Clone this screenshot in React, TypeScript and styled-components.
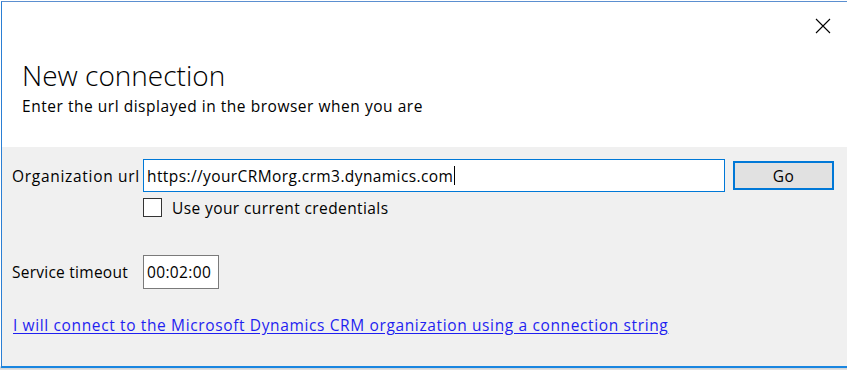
import React from "react";
import styled, { createGlobalStyle } from "styled-components";

const GlobalStyle = createGlobalStyle`
  html, body {
    margin: 0;
    padding: 0;
    background: #ffffff;
    overflow: hidden;
  }
  body {
    font-family: "Open Sans", "Noto Sans", sans-serif;
    color: #000;
  }
`;

const Backdrop = styled.div`
  width: 847px;
  height: 370px;
  overflow: hidden;
  background: linear-gradient(#fff 0, #fff 366px, #c8c8c8 367px, #e6e6e6 370px);
`;

const Window = styled.div`
  margin-left: 1px;
  margin-top: 1px;
  width: 900px;
  height: 364px;
  border-top: 1px solid #5b8fd0;
  border-left: 1px solid #2b7fd4;
  border-bottom: 2px solid #1a86e0;
  display: flex;
  flex-direction: column;
  background: #f0f0f0;
`;

const Header = styled.div`
  background: #ffffff;
  height: 145px;
  padding-left: 20px;
  display: flex;
  flex-direction: column;
`;

const TitleBar = styled.div`
  height: 56px;
  width: 810px;
  display: flex;
  justify-content: flex-end;
  align-items: flex-start;
`;

const CloseButton = styled.button`
  border: 0;
  background: transparent;
  padding: 0;
  margin-top: 15px;
  width: 18px;
  height: 18px;
  display: flex;
  align-items: center;
  justify-content: center;
  cursor: default;
`;

const Title = styled.h1`
  margin: 0;
  font-family: "Open Sans", sans-serif;
  font-weight: 300;
  font-size: 28px;
  line-height: 34px;
  color: #000;
`;

const Subtitle = styled.p`
  margin: 4px 0 0;
  font-size: 15.5px;
  line-height: 20px;
  letter-spacing: 0.53px;
  color: #000;
`;

const Body = styled.div`
  flex: 1;
  padding: 12px 0 0 10px;
  display: flex;
  flex-direction: column;
`;

const FieldRow = styled.div<{ $height: number; $top?: number }>`
  display: flex;
  align-items: center;
  height: ${(p) => p.$height}px;
  margin-top: ${(p) => p.$top ?? 0}px;
`;

const Label = styled.label<{ $spacing: number }>`
  width: 131px;
  flex-shrink: 0;
  font-size: 15.5px;
  letter-spacing: ${(p) => p.$spacing}px;
  color: #000;
`;

const UrlBox = styled.div`
  width: 577px;
  height: 31px;
  border: 1px solid #0078d7;
  background: #fff;
  display: flex;
  align-items: center;
  padding-left: 3px;
  box-sizing: content-box;
  font-size: 15.5px;
  letter-spacing: 0.4px;
`;

const Caret = styled.span`
  display: inline-block;
  width: 1px;
  height: 19px;
  background: #000;
  margin-left: 1px;
`;

const GoButton = styled.button`
  margin-left: 8px;
  width: 101px;
  height: 29px;
  border: 2px solid #0078d7;
  background: #e1e1e1;
  font-family: "Open Sans", sans-serif;
  font-size: 15.5px;
  letter-spacing: 0.4px;
  color: #000;
  padding: 0;
`;

const CheckRow = styled.div`
  display: flex;
  align-items: center;
  margin-left: 131px;
  margin-top: 6px;
  height: 19px;
  gap: 10px;
`;

const CheckBox = styled.span`
  width: 17px;
  height: 17px;
  border: 1px solid #333;
  background: #fff;
`;

const CheckLabel = styled.span`
  font-size: 15.5px;
  letter-spacing: 0.4px;
`;

const TimeBox = styled.div`
  width: 71px;
  height: 32px;
  border: 1px solid #7a7a7a;
  background: #fff;
  display: flex;
  align-items: center;
  padding-left: 3px;
  font-size: 15.5px;
  letter-spacing: 0.35px;
`;

const LinkRow = styled.div`
  margin-top: 25px;
  padding-left: 1px;
`;

const Link = styled.a`
  font-family: "Open Sans", sans-serif;
  font-size: 15.5px;
  letter-spacing: 0.63px;
  color: #1f1ff0;
  text-decoration: underline;
  text-underline-offset: 2px;
`;

export default function App() {
  return (
    <Backdrop>
      <GlobalStyle />
      <Window>
        <Header>
          <TitleBar>
            <CloseButton aria-label="Close">
              <svg width="16" height="16" viewBox="0 0 16 16">
                <path d="M1 1 L15 15 M15 1 L1 15" stroke="#000" strokeWidth="1.1" fill="none" />
              </svg>
            </CloseButton>
          </TitleBar>
          <Title>New connection</Title>
          <Subtitle>Enter the url displayed in the browser when you are</Subtitle>
        </Header>
        <Body>
          <FieldRow $height={33}>
            <Label $spacing={0.7}>Organization url</Label>
            <UrlBox>
              https://yourCRMorg.crm3.dynamics.com
              <Caret />
            </UrlBox>
            <GoButton>Go</GoButton>
          </FieldRow>
          <CheckRow>
            <CheckBox />
            <CheckLabel>Use your current credentials</CheckLabel>
          </CheckRow>
          <FieldRow $height={34} $top={38}>
            <Label $spacing={0.25}>Service timeout</Label>
            <TimeBox>00:02:00</TimeBox>
          </FieldRow>
          <LinkRow>
            <Link href="#">I will connect to the Microsoft Dynamics CRM organization using a connection string</Link>
          </LinkRow>
        </Body>
      </Window>
    </Backdrop>
  );
}
